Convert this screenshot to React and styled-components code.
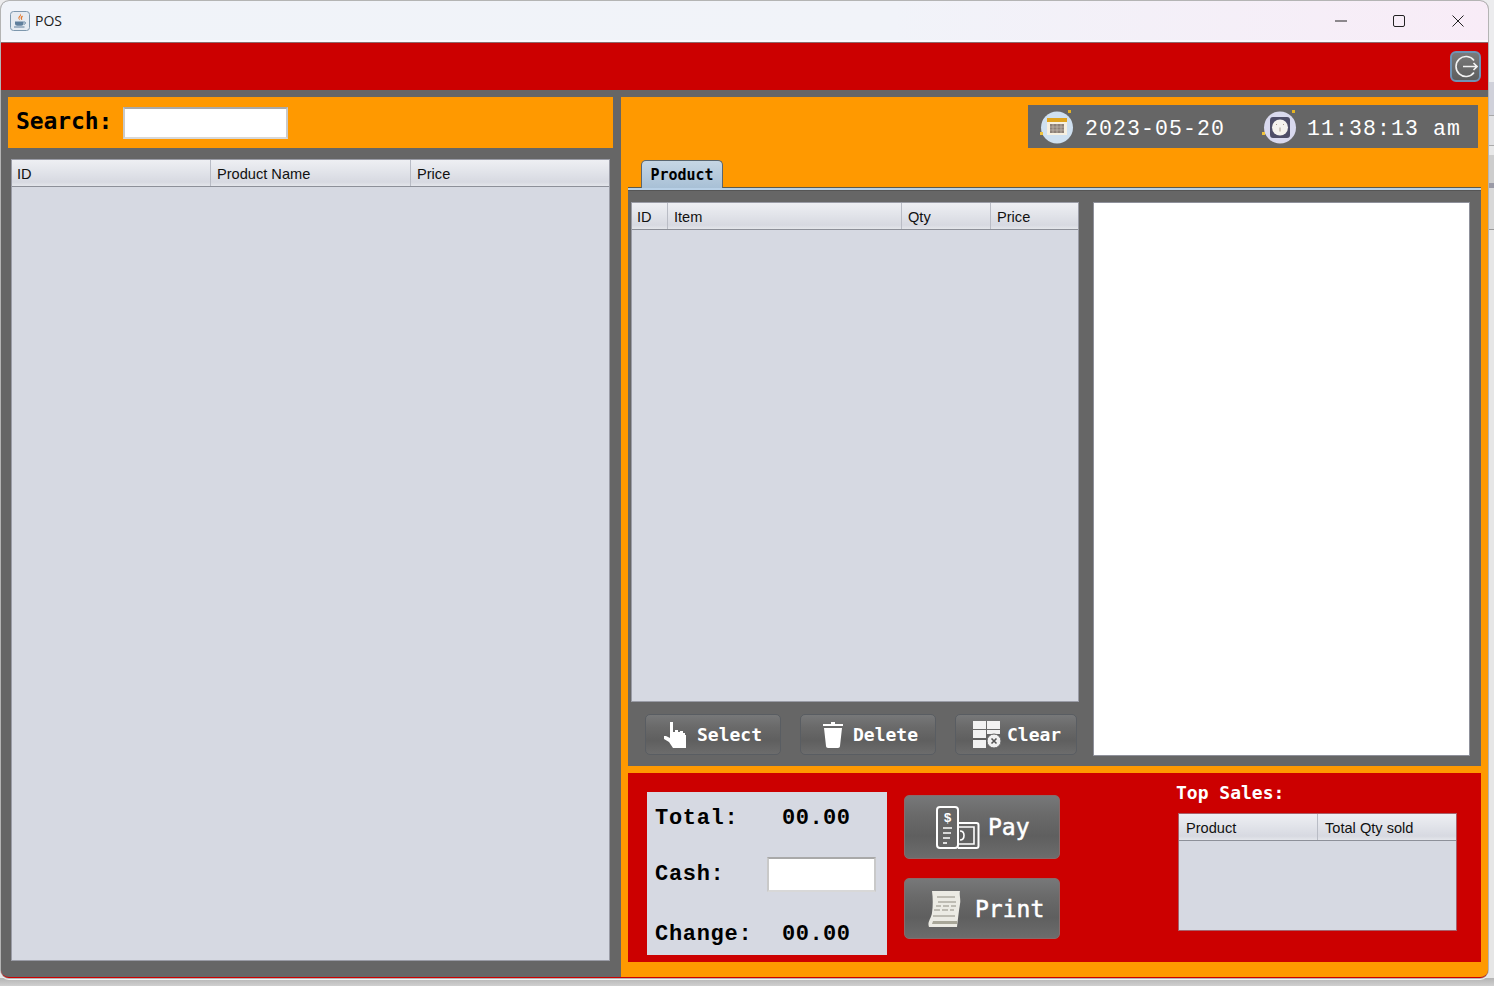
import React from "react";
import styled, { createGlobalStyle } from "styled-components";

const Global = createGlobalStyle`
  html, body { margin: 0; padding: 0; }
  body {
    width: 1494px; height: 986px; overflow: hidden;
    background: #e8e8ea;
    font-family: "Liberation Sans", Arial, sans-serif;
  }
`;

const TECH = `"DejaVu Sans Mono", "Liberation Mono", monospace`;
const COURIER = `"Liberation Mono", "Courier New", monospace`;
const SANS = `"Liberation Sans", Arial, sans-serif`;

const RED = "#cc0000";
const ORANGE = "#ff9900";
const GREY = "#666666";
const PALE = "#d6d9e2";

const Page = styled.div`
  width: 1494px;
  height: 986px;
  padding: 1px 6px 8px 1px;
  box-sizing: border-box;
  background: linear-gradient(
    #ececee 0 82px,
    #d0d1da 82px 115px,
    #a8a8a8 115px 116px,
    #e2e2e4 116px 145px,
    #aaaaaa 145px 146px,
    #e8e8e8 146px 155px,
    #cdcdcd 155px 183px,
    #9a9aa6 183px 188px,
    #d8d8d8 188px 229px,
    #999999 229px 230px,
    #e6e6e6 230px 978px,
    #b4b4b4 978px,
    #d0d0d0 986px
  );
`;

const Window = styled.div`
  width: 1487px;
  height: 977px;
  box-sizing: border-box;
  display: flex;
  flex-direction: column;
  border-radius: 8px;
  overflow: hidden;
  border-bottom: 1px solid ${RED};
  box-shadow: 0 0 0 1px #b4b4b4, 0 1px 0 1px #f4f4f4;
  background: ${GREY};
`;

const TitleBar = styled.div`
  height: 41px;
  flex: none;
  display: flex;
  align-items: center;
  padding-left: 9px;
  box-sizing: border-box;
  border-bottom: 2px solid #fafafd;
  background: linear-gradient(90deg, #f0f3f9 0%, #f1f3f9 60%, #f8ecf7 100%);
`;

const AppTitle = styled.span`
  margin-left: 5px;
  font-family: "Open Sans", "Liberation Sans", sans-serif;
  font-size: 14px;
  color: #1c1c1c;
`;

const WinControls = styled.div`
  margin-left: auto;
  padding-right: 1px;
  display: flex;
  height: 100%;
`;

const WinControl = styled.div`
  width: 58.5px;
  display: flex;
  align-items: center;
  justify-content: center;
  color: #222;
`;

const RedBar = styled.div`
  height: 47px;
  flex: none;
  display: flex;
  justify-content: flex-end;
  align-items: center;
  padding-right: 7px;
  border-top: 1px solid #8f6a6a;
  background: ${RED};
`;

const LogoutButton = styled.div`
  width: 31px;
  height: 31px;
  border-radius: 6px;
  box-sizing: border-box;
  border: 2px solid #6f93b5;
  background: linear-gradient(#7a7a7a, #5e5e5e);
  display: flex;
  align-items: center;
  justify-content: center;
`;

const Body = styled.div`
  flex: 1;
  display: flex;
  min-height: 0;
  padding-top: 7px;
`;

const LeftColumn = styled.div`
  width: 620px;
  flex: none;
  box-sizing: border-box;
  padding: 0 8px 16px 7px;
  display: flex;
  flex-direction: column;
  gap: 11px;
`;

const SearchBand = styled.div`
  height: 51px;
  flex: none;
  background: ${ORANGE};
  display: flex;
  align-items: center;
  padding-left: 8px;
  gap: 11px;
`;

const SearchLabel = styled.span`
  font-family: ${TECH};
  font-weight: 700;
  font-size: 23px;
  letter-spacing: -0.1px;
  color: #000;
  margin-top: -4px;
`;

const TextInput = styled.div`
  box-sizing: border-box;
  width: ${(p) => p.$w}px;
  height: ${(p) => p.$h}px;
  background: #fff;
  border: 2px solid #c9c9c9;
  border-top-color: #a9a9a9;
  border-bottom-color: #d8d8d8;
`;

const LeftTableWrap = styled.div`
  flex: 1;
  display: flex;
  padding: 0 3px;
  min-height: 0;
`;

const TableBox = styled.div`
  flex: ${(p) => (p.$h ? "none" : "1")};
  height: ${(p) => (p.$h ? `${p.$h}px` : "auto")};
  box-sizing: border-box;
  border: 1px solid ${(p) => p.$edge || "#9a9ca6"};
  background: ${PALE};
  display: flex;
  flex-direction: column;
`;

const HeaderRow = styled.div`
  display: grid;
  grid-template-columns: ${(p) => p.$cols};
  height: 27px;
  flex: none;
  box-sizing: border-box;
  border-bottom: 1px solid #8d9099;
  background: linear-gradient(#eeeff3 0%, #e2e4ea 45%, #d7d9e1 85%, #e4e6eb 100%);
`;

const HeaderCell = styled.div`
  font-family: ${SANS};
  font-size: 14.6px;
  color: #111;
  display: flex;
  align-items: center;
  padding-left: ${(p) => p.$inset}px;
  padding-top: 1px;
  box-sizing: border-box;
  border-right: 1px solid #b9bcc5;
  &:last-child { border-right: none; }
`;

const RightColumn = styled.div`
  flex: 1;
  background: ${ORANGE};
  padding: 8px 7px 15px;
  display: flex;
  flex-direction: column;
  min-width: 0;
`;

const ClockBar = styled.div`
  align-self: flex-end;
  margin-right: 3px;
  width: 450px;
  height: 43px;
  flex: none;
  box-sizing: border-box;
  background: ${GREY};
  display: flex;
  align-items: center;
  padding: 0 0 0 12px;
`;

const ClockText = styled.span`
  font-family: ${COURIER};
  font-size: 21.5px;
  letter-spacing: 1.1px;
  color: #fff;
  margin: 5px 0 0 9px;
  white-space: pre;
`;

const ClockGroup = styled.div`
  display: flex;
  align-items: center;
  width: 222px;
  flex: none;
`;

const TabStrip = styled.div`
  flex: none;
  display: flex;
  margin-top: 12px;
  padding-left: 13px;
  height: 27px;
`;

const Tab = styled.div`
  width: 82px;
  height: 28px;
  box-sizing: border-box;
  border: 1px solid #5a6670;
  border-bottom: none;
  border-radius: 5px 5px 0 0;
  background: linear-gradient(#c6d6e4, #a8c0d6);
  font-family: ${TECH};
  font-weight: 700;
  font-size: 15px;
  color: #000;
  display: flex;
  align-items: center;
  justify-content: center;
  z-index: 1;
`;

const TabPanel = styled.div`
  flex: none;
  height: 579px;
  box-sizing: border-box;
  border-top: 1px solid #5a5a50;
  background: ${GREY};
  display: flex;
  flex-direction: column;
  &::before {
    content: "";
    display: block;
    height: 3px;
    background: #b8d0e6;
    border-bottom: 1px solid #555;
    flex: none;
    box-sizing: border-box;
  }
`;

const PanelInner = styled.div`
  flex: 1;
  display: flex;
  padding: 11px 11px 10px 3px;
  gap: 14px;
  min-height: 0;
`;

const CartColumn = styled.div`
  width: 448px;
  flex: none;
  display: flex;
  flex-direction: column;
`;

const ButtonRow = styled.div`
  flex: none;
  display: flex;
  gap: 19px;
  margin: 12px 0 1px;
  padding-left: 14px;
`;

const GreyButton = styled.div`
  width: ${(p) => p.$w}px;
  height: ${(p) => p.$h}px;
  box-sizing: border-box;
  flex: none;
  border-radius: 5px;
  border: 1px solid ${(p) => p.$edge || "#595d62"};
  background: linear-gradient(#777879 0%, #6a6a6a 30%, #5f5f5f 65%, #6c6c6c 100%);
  display: flex;
  align-items: center;
  padding-left: ${(p) => p.$pad}px;
  gap: ${(p) => p.$gap}px;
  font-family: ${TECH};
  font-size: ${(p) => p.$size}px;
  font-weight: ${(p) => (p.$bold ? 700 : 400)};
  -webkit-text-stroke: ${(p) => (p.$bold ? "0" : "0.5px #fff")};
  color: #fff;
`;

const Receipt = styled.div`
  flex: 1;
  background: #fff;
  border: 1px solid #8f919b;
  box-sizing: border-box;
`;

const RedPanel = styled.div`
  margin-top: 7px;
  flex: 1;
  background: ${RED};
  display: flex;
  padding: 19px 24px 7px 19px;
  min-height: 0;
`;

const Summary = styled.div`
  width: 240px;
  height: 163px;
  flex: none;
  box-sizing: border-box;
  background: ${PALE};
  display: grid;
  grid-template-columns: 112px 1fr;
  grid-template-rows: 40px 72px 45px;
  padding: 6px 11px 0 8px;
  align-items: center;
  font-family: ${COURIER};
  font-weight: 700;
  font-size: 22px;
  letter-spacing: 0.7px;
  color: #000;
`;

const LastRowLabel = styled.span`
  margin-top: 4px;
`;

const SummaryValue = styled.span`
  padding-left: 15px;
  letter-spacing: 0.5px;
  margin-top: ${(p) => p.$drop || 0}px;
`;

const CashInput = styled(TextInput)`
  justify-self: end;
`;

const ActionColumn = styled.div`
  margin-left: 17px;
  padding-top: 3px;
  display: flex;
  flex-direction: column;
  gap: 19px;
  flex: none;
`;

const TopSales = styled.div`
  margin-left: auto;
  width: 279px;
  flex: none;
  margin-top: -11px;
  display: flex;
  flex-direction: column;
`;

const TopSalesTitle = styled.div`
  font-family: ${TECH};
  font-weight: 700;
  font-size: 18px;
  color: #fff;
  height: 32px;
  line-height: 24px;
  margin-left: -2px;
`;

const Cols = {
  left: "199px 200px 1fr",
  cart: "36px 234px 89px 1fr",
  top: "139px 1fr",
};

function JavaIcon() {
  return (
    <svg width="20" height="20" viewBox="0 0 20 20">
      <rect x="0.5" y="0.5" width="19" height="19" rx="3" fill="#e6ebf1" stroke="#7d97ad" />
      <path d="M10.500 2.500c2 2.500-2.200 3.500-.8 6 .3.6 1 1 1 1-1.500-.4-3.200-2.200-1.800-4C10 4.400 10.700 3.700 10.500 2.500z" fill="#e2762a" />
      <path d="M12.500 5c-1.300 1-1.800 2-.7 3.800" stroke="#e2762a" strokeWidth="1.200" fill="none" />
      <path d="M5 10.500h8.500v2c0 1.300-1 2.300-2.200 2.300H7.200C6 14.800 5 13.800 5 12.500z" fill="#5f7f9c" />
      <path d="M13.500 11h1.200c1.100 0 1.100 2.200-.9 2.400" stroke="#5f7f9c" fill="none" />
      <path d="M4 16h10.500" stroke="#5f7f9c" strokeWidth="1.200" />
    </svg>
  );
}

function Minimize() {
  return <svg width="12" height="12" viewBox="0 0 12 12"><path d="M0 6h12" stroke="currentColor" /></svg>;
}
function Maximize() {
  return <svg width="12" height="12" viewBox="0 0 12 12"><rect x=".5" y=".5" width="11" height="11" rx="1.5" fill="none" stroke="currentColor" /></svg>;
}
function CloseGlyph() {
  return <svg width="12" height="12" viewBox="0 0 12 12"><path d="M.5.5l11 11M11.5.5l-11 11" stroke="currentColor" /></svg>;
}

function LogoutIcon() {
  return (
    <svg width="25" height="25" viewBox="0 0 25 25" fill="none" stroke="#f2f2f2" strokeWidth="1.6">
      <path d="M21 6.500A10 10 0 1 0 21 18.500" />
      <path d="M10 12.500h14M20.500 9l3.500 3.500-3.500 3.500" />
    </svg>
  );
}

function CalendarIcon() {
  return (
    <svg width="36" height="36" viewBox="0 0 36 36" style={{ flex: "none" }}>
      <circle cx="17" cy="18.500" r="16" fill="#cfe0f0" />
      <rect x="28" y="1" width="3" height="3" fill="#e6b422" />
      <rect x="0" y="23" width="3" height="3" fill="#f0c33c" />
      <rect x="7" y="9" width="20" height="17" fill="#f6efe0" />
      <rect x="7" y="9" width="20" height="4" fill="#e0a41e" />
      <rect x="10" y="15" width="14" height="9" fill="#8d8078" />
      <path d="M13 15v9M17 15v9M21 15v9M10 18h14M10 21h14" stroke="#c4bab0" strokeWidth=".7" />
    </svg>
  );
}

function ClockIcon() {
  return (
    <svg width="36" height="36" viewBox="0 0 36 36" style={{ flex: "none" }}>
      <circle cx="18" cy="18.500" r="16" fill="#d9d9ee" />
      <rect x="30" y="1" width="3" height="3" fill="#e6b422" />
      <rect x="0" y="23" width="3" height="3" fill="#f0c33c" />
      <rect x="8" y="8" width="20" height="21" rx="3" fill="#4e4d68" />
      <circle cx="18" cy="18.500" r="8" fill="#f5f2ee" />
      <path d="M18 18.500v4M14 15l1 1M22 15l-1 1" stroke="#a89a8c" />
    </svg>
  );
}

function HandIcon() {
  return (
    <svg width="26" height="28" viewBox="0 0 26 28">
      <path fill="#fff" d="M8 1h3v10h2V9h3v2h2v-1h3v2h2v2l1 0v13H11l-2-3-2-3-5-3V15h2l4 2z" />
    </svg>
  );
}

function TrashIcon() {
  return (
    <svg width="22" height="26" viewBox="0 0 22 26">
      <path fill="#fff" d="M9 0h4v2h8v2H1V2h8z" />
      <path fill="#fff" d="M2 6h18l-2 18c0 1-1 2-2 2H6c-1 0-2-1-2-2z" />
    </svg>
  );
}

function ClearIcon() {
  return (
    <svg width="29" height="29" viewBox="0 -1 29 29">
      <g fill="#f2f2f2">
        <rect x="0" y="0" width="13" height="8" />
        <rect x="14" y="0" width="13" height="8" />
        <rect x="0" y="9" width="13" height="8" />
        <rect x="14" y="9" width="13" height="4" />
        <rect x="0" y="19" width="13" height="8" />
      </g>
      <circle cx="21" cy="20" r="7" fill="#f2f2f2" stroke="#666" strokeWidth="1" />
      <path d="M18.500 17.500l5 5M23.500 17.500l-5 5" stroke="#555" strokeWidth="1.600" />
    </svg>
  );
}

function PayIcon() {
  return (
    <svg width="44" height="43" viewBox="0 0 44 43" fill="none" stroke="#fff" strokeWidth="2">
      <path d="M22 17h18.500c1.200 0 2 .8 2 2v21c0 1-.8 2-2 2H22" />
      <path d="M22 21h16v17H22" strokeWidth="1.600" />
      <path d="M24 25c3 0 4 2 4 4.500s-1 4.500-4 4.500" strokeWidth="1.600" />
      <rect x="1" y="1" width="21" height="41" rx="3" fill={GREY} />
      <text x="11.500" y="16" fill="#fff" stroke="none" fontFamily={SANS} fontWeight="700" fontSize="13" textAnchor="middle">$</text>
      <path d="M7 22h9M7 27h8M7 32h7" strokeWidth="1.600" />
      <path d="M7 37h4" strokeWidth="1.600" />
    </svg>
  );
}

function PrintIcon() {
  return (
    <svg width="34" height="38" viewBox="0 0 34 38">
      <path fill="#ecebe4" d="M4 1h28c-1 4 1 8 0 13-1 6-2 14-3 23H1c-2-5 2-8 3-14 1-7 1-15 0-22z" />
      <g stroke="#8f8d82" strokeWidth="1.200" fill="none">
        <path d="M9 7h18M10 12h18M8 16h5M15 16h6M23 16h5M6 20h6M14 20h6M22 20h4M5 26h22" />
      </g>
      <path d="M5 31h24v3H4z" fill="#a8a698" />
    </svg>
  );
}

function DataTable({ cols, labels, inset = 6, ...rest }) {
  return (
    <TableBox {...rest}>
      <HeaderRow $cols={cols}>
        {labels.map((l, i) => (
          <HeaderCell key={l} $inset={i === 0 && inset === 6 ? 5 : inset}>{l}</HeaderCell>
        ))}
      </HeaderRow>
    </TableBox>
  );
}

export default function App() {
  return (
    <Page>
      <Global />
      <Window>
        <TitleBar>
          <JavaIcon />
          <AppTitle>POS</AppTitle>
          <WinControls>
            <WinControl><Minimize /></WinControl>
            <WinControl><Maximize /></WinControl>
            <WinControl><CloseGlyph /></WinControl>
          </WinControls>
        </TitleBar>
        <RedBar>
          <LogoutButton><LogoutIcon /></LogoutButton>
        </RedBar>
        <Body>
          <LeftColumn>
            <SearchBand>
              <SearchLabel>Search:</SearchLabel>
              <TextInput $w={165} $h={32} />
            </SearchBand>
            <LeftTableWrap>
              <DataTable cols={Cols.left} labels={["ID", "Product Name", "Price"]} />
            </LeftTableWrap>
          </LeftColumn>
          <RightColumn>
            <ClockBar>
              <ClockGroup>
                <CalendarIcon />
                <ClockText>2023-05-20</ClockText>
              </ClockGroup>
              <ClockGroup>
                <ClockIcon />
                <ClockText>11:38:13 am</ClockText>
              </ClockGroup>
            </ClockBar>
            <TabStrip><Tab>Product</Tab></TabStrip>
            <TabPanel>
              <PanelInner>
                <CartColumn>
                  <DataTable cols={Cols.cart} labels={["ID", "Item", "Qty", "Price"]} />
                  <ButtonRow>
                    <GreyButton $bold $w={136} $h={41} $pad={16} $gap={9} $size={18}><HandIcon />Select</GreyButton>
                    <GreyButton $bold $w={136} $h={41} $pad={21} $gap={9} $size={18}><TrashIcon />Delete</GreyButton>
                    <GreyButton $bold $w={122} $h={41} $pad={17} $gap={5} $size={18}><ClearIcon />Clear</GreyButton>
                  </ButtonRow>
                </CartColumn>
                <Receipt />
              </PanelInner>
            </TabPanel>
            <RedPanel>
              <Summary>
                <span>Total:</span>
                <SummaryValue>00.00</SummaryValue>
                <span>Cash:</span>
                <CashInput $w={109} $h={35} />
                <LastRowLabel>Change:</LastRowLabel>
                <SummaryValue $drop={4}>00.00</SummaryValue>
              </Summary>
              <ActionColumn>
                <GreyButton $w={156} $h={64} $pad={31} $gap={8} $size={23} $edge="#8a6a6a"><PayIcon />Pay</GreyButton>
                <GreyButton $w={156} $h={61} $pad={23} $gap={13} $size={23} $edge="#8a6a6a"><PrintIcon />Print</GreyButton>
              </ActionColumn>
              <TopSales>
                <TopSalesTitle>Top Sales:</TopSalesTitle>
                <DataTable cols={Cols.top} inset={7} labels={["Product", "Total Qty sold"]} $h={118} $edge="#a8606a" />
              </TopSales>
            </RedPanel>
          </RightColumn>
        </Body>
      </Window>
    </Page>
  );
}
